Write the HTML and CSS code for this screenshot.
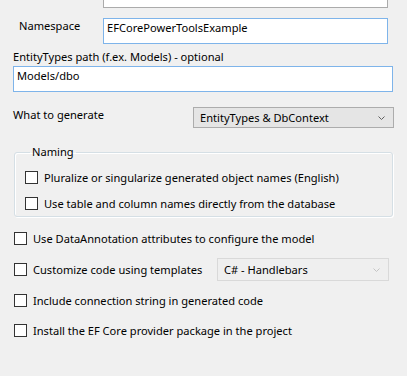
FILE: index.html
```html
<!DOCTYPE html>
<html lang="en">
<head>
  <meta charset="UTF-8">
  <title>Generate EF Core Model</title>
  <link rel="stylesheet" href="styles.css">
</head>
<body>
  <div class="dialog">
    <div class="textbox top-box"></div>

    <div class="ns-row">
      <label class="ns-label">Namespace</label>
      <div class="textbox focus ns-input">EFCorePowerToolsExample</div>
    </div>

    <label class="path-label">EntityTypes path (f.ex. Models) - optional</label>
    <div class="textbox focus path-input">Models/dbo</div>

    <div class="gen-row">
      <label class="gen-label">What to generate</label>
      <div class="combo gen-combo">
        <span>EntityTypes &amp; DbContext</span>
        <svg class="chevron" width="7" height="4" viewBox="0 0 7 4"><path d="M0.5 0.5 L3.5 3.5 L6.5 0.5" fill="none" stroke="#606060" stroke-width="1"/></svg>
      </div>
    </div>

    <fieldset class="group">
      <legend>Naming</legend>
      <div class="check first"><span class="box"></span>Pluralize or singularize generated object names (English)</div>
      <div class="check"><span class="box"></span>Use table and column names directly from the database</div>
    </fieldset>

    <div class="check outer r1"><span class="box"></span>Use DataAnnotation attributes to configure the model</div>
    <div class="check outer r2">
      <span class="box"></span><span class="tpl-label">Customize code using templates</span>
      <div class="combo disabled tpl-combo">
        <span>C# - Handlebars</span>
        <svg class="chevron" width="7" height="4" viewBox="0 0 7 4"><path d="M0.5 0.5 L3.5 3.5 L6.5 0.5" fill="none" stroke="#c4c4c4" stroke-width="1"/></svg>
      </div>
    </div>
    <div class="check outer r3"><span class="box"></span>Include connection string in generated code</div>
    <div class="check outer r4"><span class="box"></span>Install the EF Core provider package in the project</div>
  </div>
</body>
</html>
```

FILE: styles.css
```css
html, body {
  margin: 0;
  background: #f0f0f0;
  overflow: hidden;
}

body {
  font-family: "Noto Sans", "Open Sans", sans-serif;
  font-size: 11.1px;
  line-height: 16px;
  color: #000;
}

.dialog {
  width: 407px;
  height: 376px;
}

.textbox {
  box-sizing: border-box;
  background: #fff;
  border: 1px solid #7a7a7a;
  height: 26px;
  padding: 0 3px;
  line-height: 16px;
}

.textbox.focus {
  border-color: #7eb4ea;
}

.top-box {
  margin: -19px 0 0 103px;
  width: 285px;
  height: 27px;
  border-color: #ababab;
}

.ns-row {
  display: flex;
  align-items: flex-start;
  margin-top: 10px;
}

.ns-label {
  flex: none;
  width: 103px;
  padding-left: 19px;
  box-sizing: border-box;
}

.ns-input {
  width: 285px;
  padding-top: 1px;
}

.path-label {
  display: block;
  margin: 5px 0 0 13px;
}

.path-input {
  margin: 1px 0 0 13px;
  width: 380px;
  padding-top: 1px;
}

.gen-row {
  display: flex;
  align-items: flex-start;
  margin-top: 15px;
}

.gen-label {
  flex: none;
  width: 193px;
  padding-left: 13px;
  box-sizing: border-box;
}

.combo {
  box-sizing: border-box;
  display: flex;
  align-items: center;
  justify-content: space-between;
  border: 1px solid #acacac;
  background: #e5e5e5;
  padding: 0 8px 0 6px;
}

.gen-combo {
  width: 201px;
  height: 21px;
}

.combo.disabled {
  border-color: #d9d9d9;
  background: #efefef;
}

.group {
  box-sizing: border-box;
  width: 379px;
  margin: 16px 0 0 14px;
  padding: 0 0 5px 10px;
  min-width: 0;
  border: 1px solid #d5dfe5;
  border-radius: 3px;
  box-shadow: inset 1px 1px 0 #fff, 1px 1px 0 #fff;
}

.group legend {
  padding: 0 2px;
  margin-left: 5px;
  line-height: 16px;
}

.check {
  display: flex;
  align-items: center;
  height: 15px;
  line-height: 15px;
  white-space: nowrap;
}

.check .box {
  flex: none;
  box-sizing: border-box;
  width: 13px;
  height: 13px;
  border: 1px solid #333;
  background: #fff;
  margin-right: 6px;
}

.group .check.first {
  margin-top: 10px;
}

.group .check + .check {
  margin-top: 11px;
}

.outer {
  margin-left: 14px;
}

.r1 {
  margin-top: 14px;
}

.r2 {
  margin-top: 16px;
}

.r3 {
  margin-top: 16px;
}

.r4 {
  margin-top: 15px;
}

.tpl-label {
  width: 184px;
  flex: none;
}

.tpl-combo {
  flex: none;
  width: 172px;
  height: 23px;
  line-height: 16px;
}
```
